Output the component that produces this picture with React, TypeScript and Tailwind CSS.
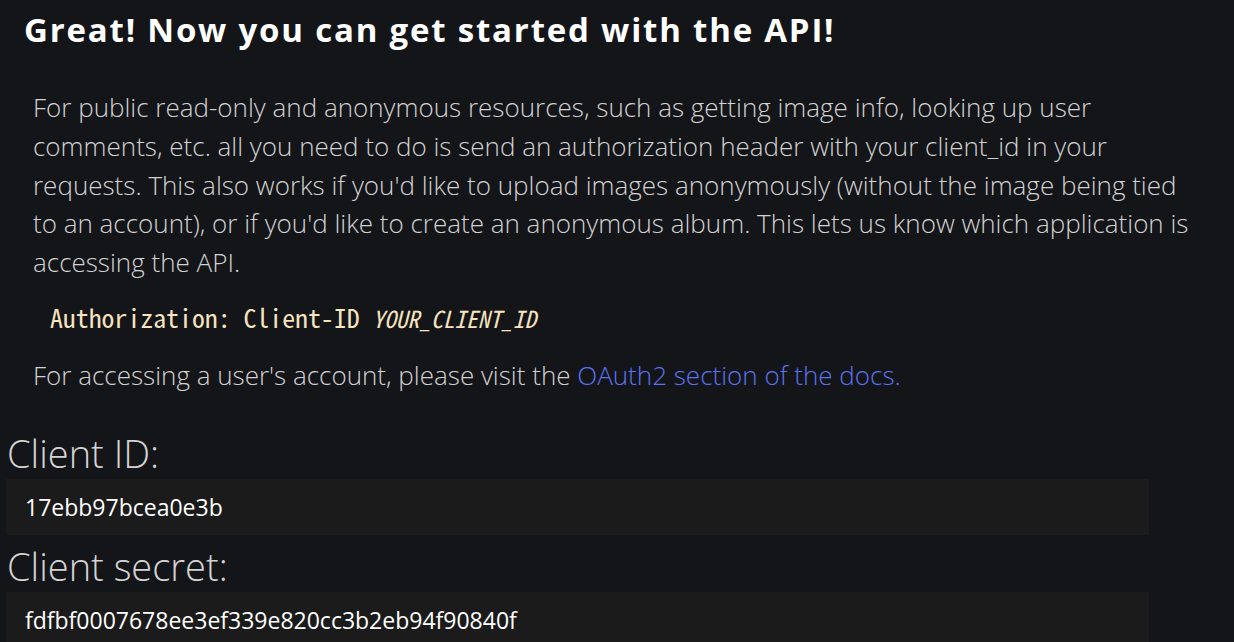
const fields = [
  { label: 'Client ID:', value: '17ebb97bcea0e3b' },
  { label: 'Client secret:', value: 'fdfbf0007678ee3ef339e820cc3b2eb94f90840f' },
];

export default function App() {
  return (
    <div className="min-h-screen w-full bg-[#141519] text-[#d2d2d2] font-['Open_Sans',sans-serif] overflow-hidden">
      <h1 className="pl-6 pt-[10px] text-[33px] leading-[40px] font-bold tracking-[1.8px] text-white">
        Great! Now you can get started with the API!
      </h1>

      <div className="pl-[33px] pt-[38px] w-[1200px]">
        <p className="text-[26px] leading-[38.8px] font-light">
          For public read-only and anonymous resources, such as getting image info, looking up user
          comments, etc. all you need to do is send an authorization header with your client_id in your
          requests. This also works if you'd like to upload images anonymously (without the image being tied
          to an account), or if you'd like to create an anonymous album. This lets us know which application is
          accessing the API.
        </p>

        <pre className="mt-[17px] pl-[17px] text-[25.8px] leading-[36px] text-[#f6e3bf] font-['Noto_Sans_Mono_CJK_JP','Liberation_Mono',monospace]">
          Authorization: Client-ID <em className="italic text-[23.4px]">YOUR_CLIENT_ID</em>
        </pre>

        <p className="mt-[20px] text-[26px] leading-[38.8px] font-light">
          For accessing a user's account, please visit the{' '}
          <a href="#" className="text-[#5b73f0]">OAuth2 section of the docs.</a>
        </p>
      </div>

      <div className="pl-[6px] pt-[38px] w-[1149px]">
        {fields.map((f) => (
          <div key={f.label} className="mb-[11px]">
            <div className="pl-px pb-[6px] text-[38px] leading-[40px] font-light text-[#d4d4d4]">{f.label}</div>
            <div className="h-[56px] bg-[#1b1b1b] pl-[19px] flex items-center text-[23px] text-white">
              {f.value}
            </div>
          </div>
        ))}
      </div>
    </div>
  );
}
